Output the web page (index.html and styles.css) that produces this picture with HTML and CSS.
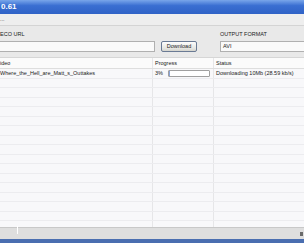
FILE: index.html
```html
<!DOCTYPE html>
<html>
    <head>
        <meta name="viewport" content="width=device-width, initial-scale=1" />
        <link rel="stylesheet" href="styles.css">
    </head>
    <body>
        <div id="window">
            <div id="titlebar"><span class="title">0.61</span></div>
            <div id="menubar">...</div>
            <div id="form">
                <div class="field url">
                    <div class="label">ECO URL</div>
                    <div class="box"></div>
                </div>
                <div class="button">Download</div>
                <div class="field format">
                    <div class="label">OUTPUT FORMAT</div>
                    <div class="box">AVI</div>
                </div>
            </div>
            <div id="list">
                <div class="row head">
                    <div class="c1">ideo</div>
                    <div class="c2">Progress</div>
                    <div class="c3">Status</div>
                </div>
                <div class="row">
                    <div class="c1">Where_the_Hell_are_Matt_s_Outtakes</div>
                    <div class="c2">3% <span class="bar"><span class="fill" style="width: 3%"></span></span></div>
                    <div class="c3">Downloading 10Mb (28.59 kb/s)</div>
                </div>
                <div class="row"><div class="c1"></div><div class="c2"></div><div class="c3"></div></div>
                <div class="row"><div class="c1"></div><div class="c2"></div><div class="c3"></div></div>
                <div class="row"><div class="c1"></div><div class="c2"></div><div class="c3"></div></div>
                <div class="row"><div class="c1"></div><div class="c2"></div><div class="c3"></div></div>
                <div class="row"><div class="c1"></div><div class="c2"></div><div class="c3"></div></div>
                <div class="row"><div class="c1"></div><div class="c2"></div><div class="c3"></div></div>
                <div class="row"><div class="c1"></div><div class="c2"></div><div class="c3"></div></div>
                <div class="row"><div class="c1"></div><div class="c2"></div><div class="c3"></div></div>
                <div class="row"><div class="c1"></div><div class="c2"></div><div class="c3"></div></div>
                <div class="row"><div class="c1"></div><div class="c2"></div><div class="c3"></div></div>
                <div class="row"><div class="c1"></div><div class="c2"></div><div class="c3"></div></div>
                <div class="row"><div class="c1"></div><div class="c2"></div><div class="c3"></div></div>
                <div class="row"><div class="c1"></div><div class="c2"></div><div class="c3"></div></div>
                <div class="row"><div class="c1"></div><div class="c2"></div><div class="c3"></div></div>
                <div class="row"><div class="c1"></div><div class="c2"></div><div class="c3"></div></div>
                <div class="row"><div class="c1"></div><div class="c2"></div><div class="c3"></div></div>
                <div class="row"><div class="c1"></div><div class="c2"></div><div class="c3"></div></div>
                <div class="row"><div class="c1"></div><div class="c2"></div><div class="c3"></div></div>
            </div>
            <div id="statusbar">
                <span class="mark"></span>
                <span class="grip"></span>
            </div>
        </div>
    </body>
</html>
```

FILE: styles.css
```css
body {
    margin: 0;
    background-color: #ececec;
    font-family: "Liberation Sans", Arial, sans-serif;
    font-size: 5.5px;
    color: #222;
}

#window {
    display: flex;
    flex-direction: column;
    height: 243px;
    overflow: hidden;
}

#titlebar {
    height: 14px;
    background: linear-gradient(#79a6ea, #3a6fd2 40%, #2f62c6);
    color: #fff;
    font-size: 8px;
    font-weight: bold;
    line-height: 14px;
    padding-left: 1px;
    flex-shrink: 0;
}

#menubar {
    height: 11px;
    line-height: 10px;
    background-color: #eeeeee;
    border-bottom: 1px solid #d4d4d4;
    color: #444;
    flex-shrink: 0;
}

#form {
    display: flex;
    align-items: flex-end;
    height: 26px;
    padding-bottom: 5px;
    background-color: #e9e9e9;
    flex-shrink: 0;
}
.field .label {
    height: 9px;
    line-height: 9px;
    margin-bottom: 2px;
}
.field .box {
    height: 9px;
    line-height: 9px;
    background-color: #fafafa;
    border: 1px solid #b0b0b0;
    padding-left: 2px;
}
.url {
    width: 155px;
}
.url .box {
    border-left: none;
}
.format {
    flex: 1;
    margin-left: 23px;
}
.format .box {
    border-right: none;
}
.button {
    width: 34px;
    height: 9px;
    line-height: 9px;
    margin-left: 6px;
    text-align: center;
    background: linear-gradient(#fdfdfd, #e6e6e2 70%, #d4d4ce);
    border: 1px solid #6a7a94;
    border-radius: 2px;
}

#list {
    flex: 1;
    background-color: #f8f8fa;
    border-top: 1px solid #d6d6d6;
    overflow: hidden;
}
.row {
    display: flex;
    height: 8.5px;
    line-height: 8px;
    border-bottom: 1px solid #ececef;
}
.row.head {
    height: 10px;
    line-height: 11px;
    background-color: #fbfbfb;
    border-bottom: 1px solid #dedede;
}
.c1 {
    width: 152px;
    border-right: 1px solid #e6e6e8;
    white-space: nowrap;
    overflow: hidden;
}
.c2 {
    width: 58px;
    padding-left: 2px;
    border-right: 1px solid #e6e6e8;
    display: flex;
    align-items: center;
    white-space: nowrap;
}
.c3 {
    flex: 1;
    padding-left: 2px;
    white-space: nowrap;
}
.bar {
    display: inline-block;
    width: 40px;
    height: 5px;
    margin-left: 5px;
    border: 1px solid #a0a0a0;
    border-radius: 1px;
    background-color: #fff;
}
.fill {
    display: block;
    height: 100%;
    background-color: #8aa4d8;
}

#statusbar {
    position: relative;
    height: 11px;
    background-color: #dedede;
    border-top: 1px solid #c8c8c8;
    border-bottom: 4px solid #4a6eb0;
    flex-shrink: 0;
}
.mark {
    position: absolute;
    left: 17px;
    top: -2px;
    width: 1px;
    height: 8px;
    background-color: #fff;
}
.grip {
    position: absolute;
    right: 1px;
    top: 4px;
    width: 3px;
    height: 4px;
    background-color: #6a6a6a;
}
```
